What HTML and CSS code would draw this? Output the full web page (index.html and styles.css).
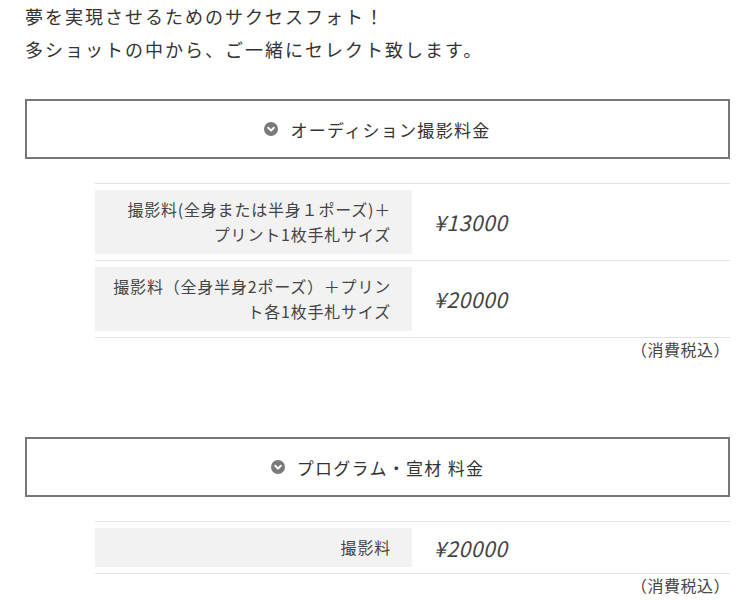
FILE: index.html
```html
<!DOCTYPE html>
<html lang="ja">
<head>
<meta charset="utf-8">
<link rel="stylesheet" href="styles.css">
</head>
<body>
<div class="page">
  <p class="intro">夢を実現させるためのサクセスフォト！<br>多ショットの中から、ご一緒にセレクト致します。</p>

  <section class="section">
    <h2 class="box-title"><svg class="icon" viewBox="0 0 14 14" width="14" height="14"><circle cx="7" cy="7" r="7" fill="#7a7a7a"/><path d="M4.2 5.8 L7 8.6 L9.8 5.8" fill="none" stroke="#fff" stroke-width="2" stroke-linecap="round" stroke-linejoin="round"/></svg>オーディション撮影料金</h2>
    <div class="price-table">
      <div class="row">
        <div class="label">撮影料(全身または半身１ポーズ)＋<br>プリント1枚手札サイズ</div>
        <div class="price">¥13000</div>
      </div>
      <div class="row">
        <div class="label">撮影料（全身半身2ポーズ）＋プリン<br>ト各1枚手札サイズ</div>
        <div class="price">¥20000</div>
      </div>
    </div>
    <p class="note">（消費税込）</p>
  </section>

  <section class="section second">
    <h2 class="box-title"><svg class="icon" viewBox="0 0 14 14" width="14" height="14"><circle cx="7" cy="7" r="7" fill="#7a7a7a"/><path d="M4.2 5.8 L7 8.6 L9.8 5.8" fill="none" stroke="#fff" stroke-width="2" stroke-linecap="round" stroke-linejoin="round"/></svg>プログラム・宣材 料金</h2>
    <div class="price-table">
      <div class="row">
        <div class="label short">撮影料</div>
        <div class="price">¥20000</div>
      </div>
    </div>
    <p class="note">（消費税込）</p>
  </section>
</div>
</body>
</html>
```

FILE: styles.css
```css
html, body {
  margin: 0;
  padding: 0;
  background: #fff;
}
body {
  font-family: "Noto Sans CJK JP", "Noto Sans", sans-serif;
  color: #333;
}
.page {
  padding: 0 20px 0 25px;
}
.intro {
  margin: 0;
  font-size: 18px;
  line-height: 33px;
  color: #333;
  letter-spacing: 2px;
}
.section {
  margin-top: 33px;
}
.section.second {
  margin-top: 77px;
}
.box-title {
  margin: 0;
  height: 56px;
  border: 2px solid #777;
  display: flex;
  align-items: center;
  justify-content: center;
  font-size: 17px;
  font-weight: normal;
  letter-spacing: 1.3px;
  color: #333;
}
.icon {
  margin-right: 12px;
  flex: none;
}
.price-table {
  margin: 24px 0 0 70px;
  border-top: 1px solid #e2e2e2;
}
.row {
  display: flex;
  align-items: center;
  padding: 6px 0;
  border-bottom: 1px solid #e2e2e2;
}
.label {
  width: 317px;
  box-sizing: border-box;
  background: #f2f2f2;
  text-align: right;
  font-size: 16px;
  letter-spacing: 0.8px;
  line-height: 25px;
  color: #444;
  padding: 7px 21px 7px 0;
  flex: none;
}
.label.short {
  padding: 7px 21px 7px 0;
}
.price {
  padding-left: 22px;
  font-size: 21px;
  letter-spacing: 0.6px;
  font-style: italic;
  color: #444;
}
.note {
  margin: 0;
  text-align: right;
  padding-right: 0;
  font-size: 16px;
  letter-spacing: 0.5px;
  line-height: 22px;
  color: #444;
}
```
